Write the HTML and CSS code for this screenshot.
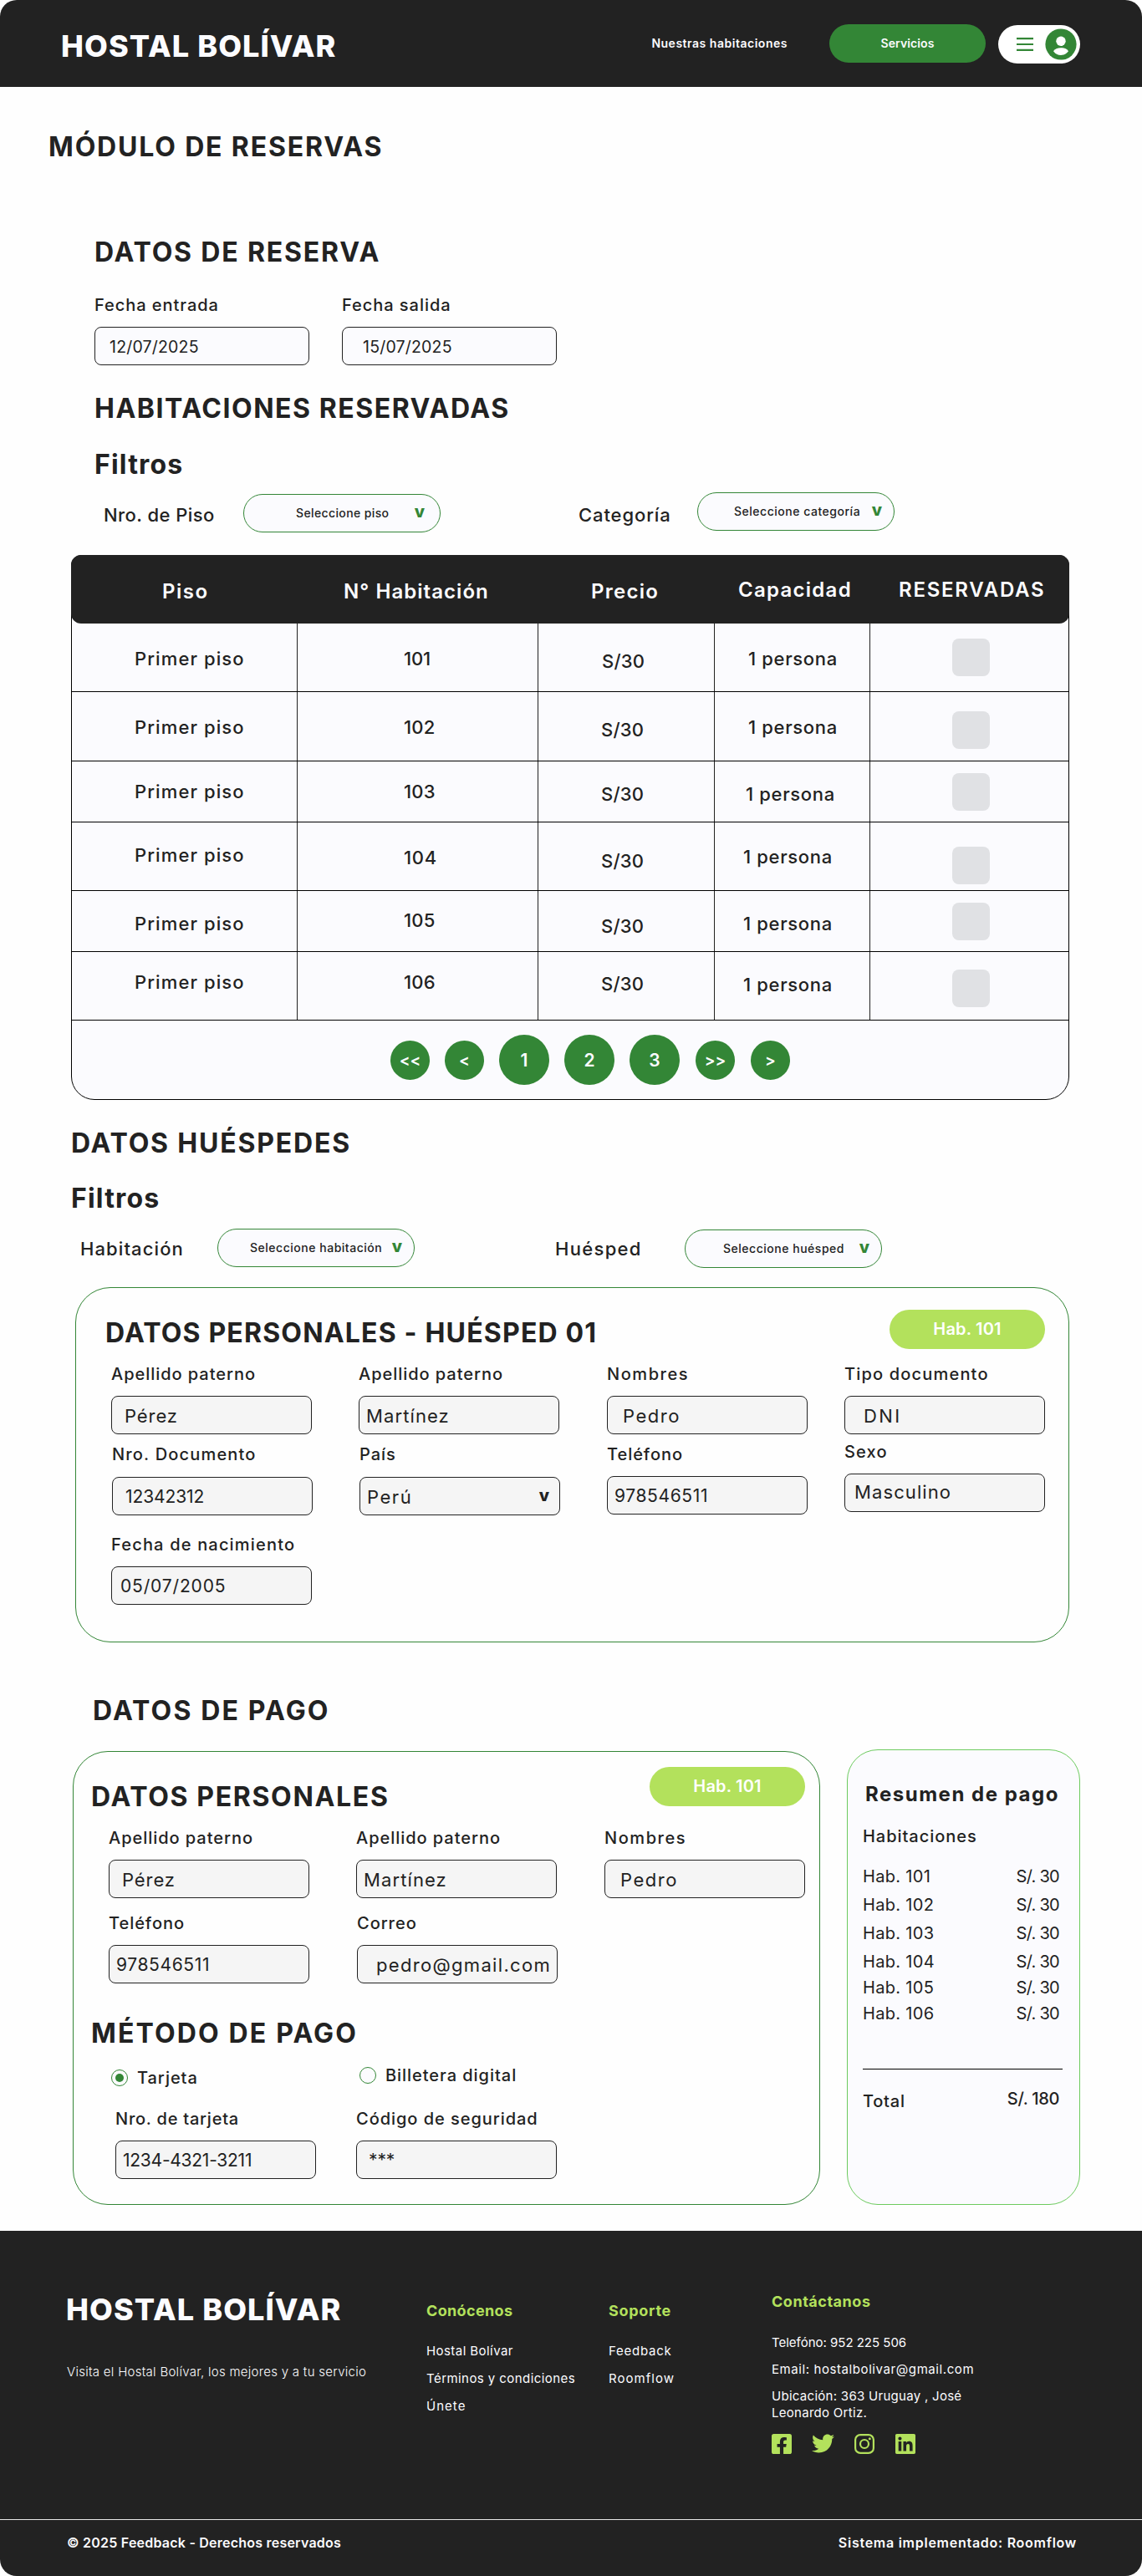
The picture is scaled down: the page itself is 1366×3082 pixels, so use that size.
FILE: index.html
```html
<!DOCTYPE html>
<html lang="es">
<head>
<meta charset="utf-8">
<title>Hostal Bolívar - Módulo de reservas</title>
<link rel="stylesheet" href="styles.css">
</head>
<body>
<div class="page">
  <header class="topbar">
    <div class="logo">HOSTAL BOLÍVAR</div>
    <nav class="nav">
      <a class="nav-link">Nuestras habitaciones</a>
      <a class="nav-button k3">Servicios</a>
      <div class="user-menu">
        <svg class="burger" viewBox="0 0 20 16"><path d="M0 1.2h20M0 8h20M0 14.8h20" stroke="#338636" stroke-width="2.2"/></svg>
        <svg class="avatar" viewBox="0 0 38 38"><circle cx="19" cy="19" r="18.6" fill="#338636"/><circle cx="19" cy="15.3" r="5.7" fill="#fff"/><path d="M10 27.2c1.6-2.6 4.9-3.9 9-3.9s7.400 1.300 9 3.900c-2.100 3-5.300 4.700-9 4.700s-6.900-1.700-9-4.700z" fill="#fff"/></svg>
      </div>
    </nav>
  </header>

  <main>
    <h1 class="title title-module k8">MÓDULO DE RESERVAS</h1>

    <section class="booking">
      <h2 class="title k8">DATOS DE RESERVA</h2>
      <div class="date-fields">
        <div class="field"><span class="label">Fecha entrada</span><div class="input date-in k1">12/07/2025</div></div>
        <div class="field"><span class="label">Fecha salida</span><div class="input date-out k1">15/07/2025</div></div>
      </div>
      <h2 class="title title-rooms k7">HABITACIONES RESERVADAS</h2>
      <h3 class="title title-filters">Filtros</h3>
    </section>

    <div class="filters filters-rooms">
      <span class="filter-label k5">Nro. de Piso</span>
      <div class="select select-floor"><span class="k5">Seleccione piso</span><b>v</b></div>
      <span class="filter-label k7">Categoría</span>
      <div class="select select-category"><span>Seleccione categoría</span><b>v</b></div>
    </div>

    <section class="rooms">
      <div class="rooms-head">
        <span class="h-floor k9">Piso</span><span class="h-room k7">N° Habitación</span><span class="h-price k8">Precio</span><span class="h-cap k8">Capacidad</span><span class="h-res k10">RESERVADAS</span>
      </div>
      <div class="row tall">
        <div class="c-floor d1 k8">Primer piso</div><div class="c-room d1 k2">101</div><div class="c-price first d4 k4">S/30</div><div class="c-cap d1">1 persona</div><div class="c-res"><i class="check"></i></div>
      </div>
      <div class="row taller">
        <div class="c-floor d1 k8">Primer piso</div><div class="c-room d1 k4">102</div><div class="c-price d4 k4">S/30</div><div class="c-cap d1">1 persona</div><div class="c-res d4"><i class="check"></i></div>
      </div>
      <div class="row short">
        <div class="c-floor k8">Primer piso</div><div class="c-room k4">103</div><div class="c-price d3 k4">S/30</div><div class="c-cap mid d3">1 persona</div><div class="c-res"><i class="check"></i></div>
      </div>
      <div class="row tall">
        <div class="c-floor u2 k8">Primer piso</div><div class="c-room d1 k6">104</div><div class="c-price d5 k4">S/30</div><div class="c-cap low">1 persona</div><div class="c-res d10"><i class="check"></i></div>
      </div>
      <div class="row short">
        <div class="c-floor d3 k8">Primer piso</div><div class="c-room u1 k4">105</div><div class="c-price d6 k4">S/30</div><div class="c-cap low d3">1 persona</div><div class="c-res"><i class="check"></i></div>
      </div>
      <div class="row tall">
        <div class="c-floor u5 k8">Primer piso</div><div class="c-room u5 k4">106</div><div class="c-price u3 k4">S/30</div><div class="c-cap low u2">1 persona</div><div class="c-res d3"><i class="check"></i></div>
      </div>
      <div class="pager">
        <a class="dot">&lt;&lt;</a><a class="dot">&lt;</a><a class="dot num">1</a><a class="dot num">2</a><a class="dot num">3</a><a class="dot next">&gt;&gt;</a><a class="dot next">&gt;</a>
      </div>
    </section>

    <section class="guests-intro">
      <h2 class="title k8">DATOS HUÉSPEDES</h2>
      <h3 class="title title-filters">Filtros</h3>
    </section>
    <div class="filters filters-guests">
      <span class="filter-label k8">Habitación</span>
      <div class="select select-room"><span>Seleccione habitación</span><b>v</b></div>
      <span class="filter-label k9">Huésped</span>
      <div class="select select-guest"><span>Seleccione huésped</span><b>v</b></div>
    </div>

    <section class="card guest-card">
      <div class="card-head">
        <h2 class="title">DATOS PERSONALES - HUÉSPED 01</h2>
        <span class="badge k2">Hab. 101</span>
      </div>
      <div class="guest-grid">
        <div class="field"><span class="label">Apellido paterno</span><div class="input p17 k7">Pérez</div></div>
        <div class="field"><span class="label">Apellido paterno</span><div class="input p8 k8">Martínez</div></div>
        <div class="field"><span class="label k9">Nombres</span><div class="input p19 k10">Pedro</div></div>
        <div class="field"><span class="label k7">Tipo documento</span><div class="input p22 k14">DNI</div></div>
        <div class="field shifted"><span class="label k7">Nro. Documento</span><div class="input digits p15 k0">12342312</div></div>
        <div class="field shifted"><span class="label">País</span><div class="input p8 k10">Perú<b class="caret">v</b></div></div>
        <div class="field"><span class="label">Teléfono</span><div class="input digits p8 k3">978546511</div></div>
        <div class="field raised"><span class="label k7">Sexo</span><div class="input p11 k8">Masculino</div></div>
        <div class="field birth"><span class="label k7">Fecha de nacimiento</span><div class="input digits p10 k4">05/07/2005</div></div>
      </div>
    </section>

    <h2 class="title title-payment k9">DATOS DE PAGO</h2>
    <div class="payment">
      <section class="card pay-card">
        <div class="card-head">
          <h2 class="title k75">DATOS PERSONALES</h2>
          <span class="badge k2">Hab. 101</span>
        </div>
        <div class="pay-grid">
          <div class="field"><span class="label">Apellido paterno</span><div class="input p17 k7">Pérez</div></div>
          <div class="field"><span class="label">Apellido paterno</span><div class="input p8 k8">Martínez</div></div>
          <div class="field"><span class="label k9">Nombres</span><div class="input p19 k10">Pedro</div></div>
          <div class="field"><span class="label">Teléfono</span><div class="input digits p8 k3">978546511</div></div>
          <div class="field mail"><span class="label">Correo</span><div class="input p22 k9">pedro@gmail.com</div></div>
        </div>
        <h2 class="title title-method k9">MÉTODO DE PAGO</h2>
        <div class="methods">
          <label class="method method-card"><i class="radio on"></i>Tarjeta</label>
          <label class="method"><i class="radio"></i>Billetera digital</label>
        </div>
        <div class="card-fields">
          <div class="field"><span class="label k5">Nro. de tarjeta</span><div class="input digits p8 k00">1234-4321-3211</div></div>
          <div class="field"><span class="label">Código de seguridad</span><div class="input digits p14 k0">***</div></div>
        </div>
      </section>

      <aside class="summary">
        <h3 class="summary-title k9">Resumen de pago</h3>
        <div class="summary-sub">Habitaciones</div>
        <ul class="summary-list">
          <li><span>Hab. 101</span><span class="price">S/. 30</span></li>
          <li><span>Hab. 102</span><span class="price">S/. 30</span></li>
          <li><span>Hab. 103</span><span class="price">S/. 30</span></li>
          <li><span>Hab. 104</span><span class="price">S/. 30</span></li>
          <li><span>Hab. 105</span><span class="price">S/. 30</span></li>
          <li><span>Hab. 106</span><span class="price">S/. 30</span></li>
        </ul>
        <div class="summary-total"><span class="k5">Total</span><span class="total-price k0">S/. 180</span></div>
      </aside>
    </div>
  </main>

  <footer class="footer">
    <div class="footer-main">
      <div class="f-brand">
        <div class="logo">HOSTAL BOLÍVAR</div>
        <p class="k4">Visita el Hostal Bolívar, los mejores y a tu servicio</p>
      </div>
      <div class="f-col">
        <h4 class="k4">Conócenos</h4>
        <a class="k5">Hostal Bolívar</a><a class="k5">Términos y condiciones</a><a class="k9">Únete</a>
      </div>
      <div class="f-col">
        <h4>Soporte</h4>
        <a class="k7">Feedback</a><a class="k9">Roomflow</a>
      </div>
      <div class="f-col f-contact">
        <h4 class="k5">Contáctanos</h4>
        <a class="k2">Telefóno: 952 225 506</a><a>Email: hostalbolivar@gmail.com</a><a class="k4">Ubicación: 363 Uruguay , José<br>Leonardo Ortiz.</a>
        <div class="social">
          <svg viewBox="0 32 448 448"><path d="M400 32H48A48 48 0 0 0 0 80v352a48 48 0 0 0 48 48h137.250V327.690h-63V256h63v-54.640c0-62.150 37-96.480 93.670-96.480 27.140 0 55.520 4.840 55.520 4.840v61h-31.270c-30.810 0-40.420 19.120-40.420 38.730V256h68.780l-11 71.690h-57.780V480H400a48 48 0 0 0 48-48V80a48 48 0 0 0-48-48z"/></svg>
          <svg class="bird" viewBox="0 0 512 512"><path d="M459.370 151.716c.325 4.548.325 9.097.325 13.645 0 138.720-105.583 298.558-298.558 298.558-59.452 0-114.680-17.219-161.137-47.106 8.447.974 16.568 1.299 25.340 1.299 49.055 0 94.213-16.568 130.274-44.832-46.132-.975-84.792-31.188-98.112-72.772 6.498.974 12.995 1.624 19.818 1.624 9.421 0 18.843-1.300 27.614-3.573-48.081-9.747-84.143-51.980-84.143-102.985v-1.299c13.969 7.797 30.214 12.670 47.431 13.319-28.264-18.843-46.781-51.005-46.781-87.391 0-19.492 5.197-37.360 14.294-52.954 51.655 63.675 129.300 105.258 216.365 109.807-1.624-7.797-2.599-15.918-2.599-24.040 0-57.828 46.782-104.934 104.934-104.934 30.213 0 57.502 12.670 76.670 33.137 23.715-4.548 46.456-13.320 66.599-25.340-7.798 24.366-24.366 44.833-46.132 57.827 21.117-2.273 41.584-8.122 60.426-16.243-14.292 20.791-32.161 39.308-52.628 54.253z"/></svg>
          <svg viewBox="0 0 24 24"><g fill="none" stroke="#b3e15c" stroke-width="2.200"><rect x="1.100" y="1.100" width="21.800" height="21.800" rx="6"/><circle cx="12" cy="12" r="5"/></g><circle cx="18.300" cy="5.700" r="1.500"/></svg>
          <svg viewBox="0 32 448 448"><path d="M416 32H31.900C14.300 32 0 46.500 0 64.300v383.400C0 465.500 14.300 480 31.900 480H416c17.600 0 32-14.500 32-32.300V64.300c0-17.800-14.400-32.300-32-32.300zM135.400 416H69V202.200h66.500V416zm-33.200-243c-21.300 0-38.500-17.300-38.500-38.500S80.900 96 102.200 96c21.200 0 38.500 17.300 38.500 38.500 0 21.300-17.200 38.500-38.500 38.500zm282.100 243h-66.400V312c0-24.800-.5-56.700-34.500-56.700-34.600 0-39.900 27-39.900 54.900V416h-66.400V202.200h63.700v29.200h.9c8.900-16.800 30.600-34.500 62.900-34.500 67.200 0 79.700 44.300 79.700 101.900V416z"/></svg>
        </div>
      </div>
    </div>
    <div class="footer-bottom">
      <span class="k35">© 2025 Feedback - Derechos reservados</span>
      <span class="k65">Sistema implementado: Roomflow</span>
    </div>
  </footer>
</div>
</body>
</html>
```
FILE: styles.css
```css
* { box-sizing: border-box; }
/* --k: tracking step of a text, --t: correction for its type size */
body { --t: .012; margin: 0; background: #fff; color: #222; font-family: Inter, "Open Sans", sans-serif; font-size: 20px; font-weight: 500; }
body * { letter-spacing: calc((var(--k, .06) - var(--t)) * 1em); }
h1, h2, h3, h4, p, ul { margin: 0; padding: 0; }
ul { list-style: none; }
i { font-style: normal; }

.page { width: 1366px; height: 3082px; border-radius: 20px; overflow: hidden; background: #fefefe; white-space: nowrap; }

/* Header */
.topbar { height: 104px; background: #222; display: flex; align-items: center; padding: 0 74px 0 73px; color: #fcfcff; }
.logo { --t: .03; font-size: 36px; font-weight: 800; line-height: 44px; color: #fcfcff; }
.topbar .logo { padding-top: 5px; }
.nav { --t: .023; margin-left: auto; display: flex; align-items: center; font-size: 14px; font-weight: 600; }
.nav-link { margin-right: 50px; padding-bottom: 2px; }
.nav-button { width: 187px; height: 46px; border-radius: 23px; background: #338636; line-height: 45px; text-align: center; margin-right: 15px; }
.user-menu { width: 98px; height: 46px; margin-top: 2px; border-radius: 23px; background: #fff; display: flex; align-items: center; padding: 0 4px 0 22px; }
.burger { width: 20px; height: 16px; }
.avatar { width: 38px; height: 38px; margin-left: auto; }

/* Headings */
.title { --t: .023; font-size: 32px; font-weight: 700; line-height: 40px; }
.title-module { margin: 52px 0 0 58px; }
.booking { padding: 86px 0 0 113px; }
.title-rooms { margin-top: 32px; }
.booking .title-filters { margin-top: 27px; }
.date-fields { display: flex; gap: 39px; margin-top: 31px; }
.date-fields .field { width: 257px; }

/* Fields */
.field { display: flex; flex-direction: column; gap: 14px; width: 240px; }
.label { line-height: 24px; }
.input { --t: .03; height: 46px; border: 1px solid #222; border-radius: 8px; background: #f5f5f5; display: flex; align-items: center; font-size: 22px; font-weight: 400; padding-top: 1px; }
.input.digits { --t: 0; font-size: 21px; }
.date-fields .input { --t: 0; background: #fbfbfe; font-size: 19.5px; }
.date-in { padding-left: 17px; }
.date-out { padding-left: 24px; }
.p8 { padding-left: 8px; }
.p10 { padding-left: 10px; }
.p11 { padding-left: 11px; }
.p14 { padding-left: 14px; }
.p15 { padding-left: 15px; }
.p17 { padding-left: 15px; }
.p19 { padding-left: 18px; }
.p22 { padding-left: 22px; }
.caret { margin: 0 12px 4px auto; font-size: 20px; font-weight: 800; letter-spacing: 0; }

/* Filters */
.filters { display: grid; align-items: start; height: 48px; }
.filters-rooms { margin-top: 13px; padding-left: 124px; grid-template-columns: 167px 401px 142px 236px; }
.filters-guests { margin-top: 16px; padding-left: 96px; grid-template-columns: 164px 404px 155px 236px; }
.filter-label { --t: .03; font-size: 22px; line-height: 26px; margin-top: 14px; }
.filters-guests .filter-label { margin-top: 11px; }
.select { --t: .023; width: 236px; height: 46px; border: 1px solid #338636; border-radius: 23px; background: #fbfbfe; display: flex; align-items: center; font-size: 14px; padding: 0 14px 1px 44px; }
.select b { margin: 0 0 4px auto; color: #338636; font-size: 20px; font-weight: 800; letter-spacing: 0; }
.select-floor { margin-top: 2px; padding-left: 62px; padding-right: 18px; }
.select-category { padding-left: 43px; }
.select-room { padding-left: 38px; }
.select-guest { margin-top: 1px; padding-left: 45px; }

/* Rooms table */
.rooms { margin: 27px 0 0 85px; width: 1194px; height: 652px; border: 1px solid #000; border-radius: 12px 12px 28px 28px; background: #fbfbfe; }
.rooms-head { --t: .027; height: 82px; margin: -1px -1px 0; border-radius: 12px; background: #222; color: #fcfcff; display: grid; grid-template-columns: 271px 288px 211px 186px 1fr; align-items: center; font-size: 24px; font-weight: 600; }
.h-floor { padding: 5px 0 0 109px; }
.h-room { padding: 5px 0 0 55px; }
.h-price { padding: 5px 0 0 63px; }
.h-cap { padding: 1px 0 0 28px; }
.h-res { padding: 1px 0 0 34px; }
.row { --t: .03; display: grid; grid-template-columns: 270px 288px 211px 186px 1fr; border-bottom: 1px solid #000; font-size: 22px; }
.row > div { display: flex; align-items: center; border-right: 1px solid #222; }
.row > div:last-child { border-right: 0; }
.tall { height: 82px; }
.taller { height: 83px; }
.short { height: 73px; }
.c-floor { padding-left: 75px; }
.c-room { padding-left: 127px; }
.c-price { padding-left: 75px; }
.c-price.first { padding-left: 76px; }
.c-cap { padding-left: 40px; }
.c-cap.mid { padding-left: 37px; }
.c-cap.low { padding-left: 34px; }
.c-res { padding-left: 98px; }
.check { width: 45px; height: 45px; border-radius: 8px; background: #e0e1e4; }
.d1 { padding-top: 2px; }
.d3 { padding-top: 6px; }
.d4 { padding-top: 8px; }
.d5 { padding-top: 10px; }
.d6 { padding-top: 12px; }
.d10 { padding-top: 21px; }
.u1 { padding-bottom: 2px; }
.u2 { padding-bottom: 4px; }
.u3 { padding-bottom: 6px; }
.u5 { padding-bottom: 10px; }
.pager { height: 94px; display: flex; align-items: center; gap: 18px; padding-left: 381px; }
.dot { width: 47px; height: 47px; border-radius: 50%; background: #338636; color: #fcfcff; display: flex; align-items: center; justify-content: center; font-size: 19px; font-weight: 600; letter-spacing: 0; }
.dot.num { width: 60px; height: 60px; font-size: 21px; }
.dot.next { margin-left: 1px; }

/* Guests */
.guests-intro { margin: 32px 0 0 85px; }
.guests-intro .title-filters { margin-top: 26px; }
.card { border: 1px solid #338636; border-radius: 42px; }
.card-head { display: flex; justify-content: space-between; }
.badge { width: 186px; height: 47px; border-radius: 23.5px; background: #b3e15c; color: #fff; font-weight: 600; line-height: 46px; text-align: center; }
.guest-card { margin: 22px 0 0 90px; width: 1189px; height: 425px; padding-top: 26px; }
.guest-card .card-head { height: 48px; padding: 0 28px 0 35px; }
.guest-card .title { margin-top: 8px; }
.guest-grid { margin: 17px 0 0 42px; display: grid; grid-template-columns: 296px 297px 284px 240px; row-gap: 12px; }
.shifted { padding-left: 1px; width: 241px; gap: 15px; margin-bottom: -1px; }
.raised { margin-top: -3px; }
.raised .input { padding-bottom: 3px; }
.birth { margin-top: 12px; }

/* Payment */
.title-payment { margin: 62px 0 0 111px; }
.payment { margin: 26px 0 0 87px; display: flex; gap: 32px; height: 545px; }
.pay-card { width: 894px; margin-top: 2px; padding-top: 18px; }
.pay-card .card-head { height: 56px; padding: 0 17px 0 21px; }
.pay-card .card-head .title { margin-top: 16px; }
.pay-grid { margin: 17px 0 0 42px; display: grid; grid-template-columns: 296px 297px 240px; row-gap: 18px; }
.mail { margin-left: 1px; }
.title-method { margin: 40px 0 0 21px; }
.methods { margin: 20px 0 0 45px; display: grid; grid-template-columns: 297px 240px; height: 23px; align-items: start; }
.method { display: flex; align-items: center; gap: 11px; line-height: 20px; }
.method-card { margin-top: 3px; }
.radio { width: 20px; height: 20px; border: 1px solid #338636; border-radius: 50%; background: #fbfbfe; display: grid; place-items: center; }
.radio.on::after { content: ""; width: 10px; height: 10px; border-radius: 50%; background: #338636; }
.card-fields { margin: 27px 0 0 50px; display: flex; gap: 48px; }

/* Summary */
.summary { width: 279px; border: 1px solid #6dcb5f; border-radius: 37px; background: #fbfbfe; padding: 38px 24px 0 18px; }
.summary-title { --t: .027; font-size: 24px; font-weight: 700; line-height: 30px; margin-left: 3px; }
.summary-sub { line-height: 24px; margin: 23px 0 24px; }
.summary-list { font-weight: 400; }
.summary-list li { display: flex; justify-content: space-between; line-height: 24px; margin-bottom: 10px; }
.summary-list li:nth-child(n+4) { margin-bottom: 7px; }
.summary-list li span { letter-spacing: .016em; }
.summary-list li .price { letter-spacing: -.035em; }
.summary-list li:last-child { margin-bottom: 54px; }
.summary-total { margin: 0 -4px 0 0; padding: 26px 4px 0 0; border-top: 1px solid #000; display: flex; justify-content: space-between; line-height: 24px; }
.total-price { margin-top: -3px; }

/* Footer */
.footer { --t: .021; margin-top: 31px; height: 413px; background: #222; color: #fcfcff; font-size: 15px; font-weight: 400; }
.footer-main { height: 345px; padding-left: 79px; display: grid; grid-template-columns: 430px 218px 195px 1fr; }
.f-brand { padding-top: 72px; }
.f-brand p { margin: 43px 0 0 1px; font-weight: 300; line-height: 20px; }
.f-col { padding: 84px 0 0 1px; display: flex; flex-direction: column; gap: 13px; line-height: 20px; }
.f-col h4 { color: #b3e15c; font-size: 18px; font-weight: 700; line-height: 24px; margin-bottom: 13px; }
.f-contact { padding-top: 73px; gap: 12px; }
.f-contact h4 { margin-bottom: 15px; }
.social { display: flex; margin-top: 3px; fill: #b3e15c; }
.social svg { width: 24px; height: 24px; margin-right: 25px; }
.social .bird { width: 27px; height: 27px; margin: -2px 24px 0 -1px; }
.footer-bottom { border-top: 1px solid #e8e8e8; height: 68px; padding: 15px 78px 0 80px; display: flex; justify-content: space-between; font-size: 16px; font-weight: 600; line-height: 24px; }

/* Tracking steps */
.k00 { --k: -.012; }
.k0 { --k: -.005; }
.k1 { --k: .01; }
.k2 { --k: .02; }
.k3 { --k: .03; }
.k35 { --k: .035; }
.k4 { --k: .04; }
.k5 { --k: .05; }
.k6 { --k: .06; }
.k65 { --k: .067; }
.k7 { --k: .071; }
.k75 { --k: .075; }
.k8 { --k: .08; }
.k9 { --k: .09; }
.k10 { --k: .1; }
.k14 { --k: .14; }
```
